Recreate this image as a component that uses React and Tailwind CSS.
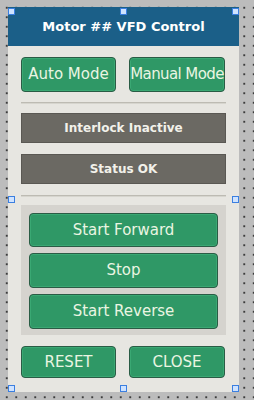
import React from 'react'

const font = { fontFamily: '"DejaVu Sans", Verdana, sans-serif' }

function GreenBtn({ label, className = '' }) {
  return (
    <button
      className={`flex items-center justify-center bg-[#2f9866] border border-[#2a5c45] rounded-[4px] text-[#eaf5e2] text-[15px] leading-none whitespace-nowrap shadow-[inset_0_0_0_1px_#3aa873] ${className}`}
    >
      {label}
    </button>
  )
}

function StatusBar({ label }) {
  return (
    <div className="h-[30px] flex items-center justify-center bg-[#6b6963] border border-[#5a5853] text-[#f2f1ea] text-[12px] font-bold">
      {label}
    </div>
  )
}

function Handle({ className }) {
  return <div className={`absolute w-[7px] h-[7px] bg-[#cfe3ff] border border-[#3b7fe0] ${className}`} />
}

export default function App() {
  return (
    <div
      style={font}
      className="relative w-[254px] h-[400px] overflow-hidden bg-[#bcbcbc] bg-[radial-gradient(#3c3c3c_0.9px,transparent_1.1px)] bg-[length:9.5px_9.5px] bg-[position:2px_3px] pt-[7px] pl-[8px]"
    >
      <div className="w-[231px] h-[385px] bg-[#e7e6e1] flex flex-col">
        <div className="h-[39px] bg-[#1b5f88] flex items-center justify-center text-white text-[13px] font-bold">
          Motor ## VFD Control
        </div>

        <div className="flex flex-col px-[13px]">
          <div className="flex gap-[13px] mt-[11px]">
            <GreenBtn label="Auto Mode" className="w-[95px] h-[35px]" />
            <GreenBtn label="Manual Mode" className="w-[96px] h-[35px] tracking-[-0.6px] text-[14px]" />
          </div>

          <div className="mt-[10px] h-[2px] bg-[#bdbbb3] border-b border-[#d6d5ce]" />

          <div className="mt-[9px] flex flex-col gap-[11px]">
            <StatusBar label="Interlock Inactive" />
            <StatusBar label="Status OK" />
          </div>

          <div className="mt-[11px] h-[2px] bg-[#bdbbb3] border-b border-[#d6d5ce]" />

          <div className="mt-[8px] h-[130px] bg-[#d5d3ce] px-[8px] pt-[8px] flex flex-col gap-[6px]">
            <GreenBtn label="Start Forward" className="h-[34px] w-full" />
            <GreenBtn label="Stop" className="h-[35px] w-full" />
            <GreenBtn label="Start Reverse" className="h-[35px] w-full" />
          </div>

          <div className="flex gap-[13px] mt-[11px]">
            <GreenBtn label="RESET" className="w-[95px] h-[32px]" />
            <GreenBtn label="CLOSE" className="w-[96px] h-[32px]" />
          </div>
        </div>
      </div>

      <Handle className="left-[8px] top-[8px]" />
      <Handle className="left-[120px] top-[8px]" />
      <Handle className="left-[232px] top-[8px]" />
      <Handle className="left-[8px] top-[196px]" />
      <Handle className="left-[232px] top-[196px]" />
      <Handle className="left-[8px] top-[385px]" />
      <Handle className="left-[120px] top-[385px]" />
      <Handle className="left-[232px] top-[385px]" />
    </div>
  )
}
